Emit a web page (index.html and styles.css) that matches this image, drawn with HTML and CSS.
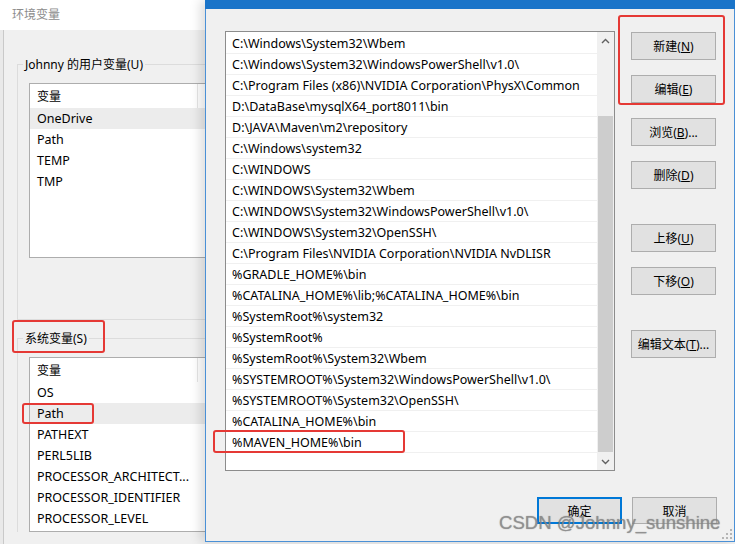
FILE: index.html
```html
<!DOCTYPE html>
<html lang="zh">
<head>
  <meta charset="UTF-8" />
  <meta name="viewport" content="width=device-width, initial-scale=1.0"/>
  <title>编辑环境变量</title>
  <link rel="stylesheet" href="styles.css">
</head>
<body>
  <!-- 后面的 环境变量 窗口 -->
  <div class="win-back">
    <div class="back-title">环境变量</div>
    <div class="back-body">
      <fieldset class="group group-user">
        <legend>Johnny 的用户变量(U)</legend>
        <div class="varlist">
          <div class="varlist-head"><span class="col-name">变量</span><span class="col-value">值</span></div>
          <div class="var-row selected">OneDrive</div>
          <div class="var-row">Path</div>
          <div class="var-row">TEMP</div>
          <div class="var-row">TMP</div>
        </div>
      </fieldset>
      <fieldset class="group group-sys">
        <legend>系统变量(S)</legend>
        <div class="varlist">
          <div class="varlist-head"><span class="col-name">变量</span><span class="col-value">值</span></div>
          <div class="var-row">OS</div>
          <div class="var-row selected">Path</div>
          <div class="var-row">PATHEXT</div>
          <div class="var-row">PERL5LIB</div>
          <div class="var-row">PROCESSOR_ARCHITECT...</div>
          <div class="var-row">PROCESSOR_IDENTIFIER</div>
          <div class="var-row">PROCESSOR_LEVEL</div>
        </div>
      </fieldset>
    </div>
  </div>

  <!-- 前面的 编辑环境变量 窗口 -->
  <div class="win-front">
    <div class="front-band"></div>
    <div class="front-body">
      <div class="front-main">
        <div class="pathlist">
          <div class="path-rows">
            <div class="path-row">C:\Windows\System32\Wbem</div>
            <div class="path-row">C:\Windows\System32\WindowsPowerShell\v1.0\</div>
            <div class="path-row">C:\Program Files (x86)\NVIDIA Corporation\PhysX\Common</div>
            <div class="path-row">D:\DataBase\mysqlX64_port8011\bin</div>
            <div class="path-row">D:\JAVA\Maven\m2\repository</div>
            <div class="path-row">C:\Windows\system32</div>
            <div class="path-row">C:\WINDOWS</div>
            <div class="path-row">C:\WINDOWS\System32\Wbem</div>
            <div class="path-row">C:\WINDOWS\System32\WindowsPowerShell\v1.0\</div>
            <div class="path-row">C:\WINDOWS\System32\OpenSSH\</div>
            <div class="path-row">C:\Program Files\NVIDIA Corporation\NVIDIA NvDLISR</div>
            <div class="path-row">%GRADLE_HOME%\bin</div>
            <div class="path-row">%CATALINA_HOME%\lib;%CATALINA_HOME%\bin</div>
            <div class="path-row">%SystemRoot%\system32</div>
            <div class="path-row">%SystemRoot%</div>
            <div class="path-row">%SystemRoot%\System32\Wbem</div>
            <div class="path-row">%SYSTEMROOT%\System32\WindowsPowerShell\v1.0\</div>
            <div class="path-row">%SYSTEMROOT%\System32\OpenSSH\</div>
            <div class="path-row">%CATALINA_HOME%\bin</div>
            <div class="path-row">%MAVEN_HOME%\bin</div>
          </div>
          <div class="scrollbar">
            <div class="scroll-btn">
              <svg width="9" height="6" viewBox="0 0 9 6"><path d="M1 5 L4.5 1.5 L8 5" fill="none" stroke="#606060" stroke-width="1.4"/></svg>
            </div>
            <div class="scroll-track"><div class="scroll-thumb"></div></div>
            <div class="scroll-btn">
              <svg width="9" height="6" viewBox="0 0 9 6"><path d="M1 1 L4.5 4.5 L8 1" fill="none" stroke="#606060" stroke-width="1.4"/></svg>
            </div>
          </div>
        </div>
        <div class="btn-col">
          <button class="btn">新建(<u>N</u>)</button>
          <button class="btn">编辑(<u>E</u>)</button>
          <button class="btn">浏览(<u>B</u>)...</button>
          <button class="btn">删除(<u>D</u>)</button>
          <button class="btn gap-big">上移(<u>U</u>)</button>
          <button class="btn">下移(<u>O</u>)</button>
          <button class="btn gap-big">编辑文本(<u>T</u>)...</button>
        </div>
      </div>
      <div class="front-foot">
        <button class="btn btn-default">确定</button>
        <button class="btn">取消</button>
      </div>
    </div>
    <svg class="grip" width="10" height="10" viewBox="0 0 10 10">
      <g fill="#b5b5b5">
        <rect x="8" y="0" width="2" height="2"/>
        <rect x="4" y="4" width="2" height="2"/><rect x="8" y="4" width="2" height="2"/>
        <rect x="0" y="8" width="2" height="2"/><rect x="4" y="8" width="2" height="2"/><rect x="8" y="8" width="2" height="2"/>
      </g>
    </svg>
  </div>

  <!-- 红色标注框 -->
  <div class="mark mark-sys"></div>
  <div class="mark mark-path"></div>
  <div class="mark mark-maven"></div>
  <div class="mark mark-btns"></div>

  <div class="watermark">CSDN @Johnny_sunshine</div>
</body>
</html>
```

FILE: styles.css
```css
body {
  margin: 0;
  width: 735px;
  height: 544px;
  overflow: hidden;
  position: relative;
  background: #e9e9e9;
  font-family: "Noto Sans", "Noto Sans CJK SC", sans-serif;
  font-size: 12px;
  color: #000;
}
button {
  font-family: inherit;
  font-size: 12px;
}

/* back window */
.win-back {
  position: absolute;
  left: 0;
  top: 0;
  width: 735px;
  height: 544px;
}
.back-title {
  height: 30px;
  background: #fff;
  color: #8c8c8c;
  padding-left: 12px;
  line-height: 29px;
}
.back-body {
  margin-left: 3px;
  border-left: 1px solid #c9c9c9;
  background: #f0f0f0;
  height: 514px;
  padding-left: 13px;
  padding-top: 26px;
  box-sizing: border-box;
}
.group {
  border: 1px solid #dcdcdc;
  margin: 0;
  padding: 0 0 0 11px;
  min-width: 0;
}
.group legend {
  padding: 0 2px;
  margin-left: -6px;
  line-height: 17px;
}
.group-user {
  padding-bottom: 61px;
}
.group-sys {
  margin-top: 10px;
  border-bottom: none;
}
.varlist {
  margin-top: 10px;
  width: 420px;
  height: 175px;
  box-sizing: border-box;
  border: 1px solid #adadad;
  background: #fff;
  font-size: 12.5px;
}
.varlist-head {
  display: flex;
  height: 24px;
  line-height: 25px;
  font-size: 12px;
}
.col-name {
  width: 160px;
  padding-left: 7px;
  border-right: 1px solid #e5e5e5;
}
.col-value {
  padding-left: 7px;
}
.var-row {
  height: 21px;
  line-height: 22px;
  padding-left: 7px;
}
.var-row.selected {
  background: #ececec;
}

/* front window */
.win-front {
  position: absolute;
  left: 205px;
  top: 0;
  width: 530px;
  height: 542px;
  box-sizing: border-box;
  border: 1px solid #4a90d6;
  border-top: none;
  background: #f0f0f0;
  box-shadow: -5px 0 10px rgba(0, 0, 0, 0.13);
}
.front-band {
  height: 9px;
  background: #1a74c9;
  margin: 0 -1px;
}
.front-body {
  padding: 22px 17px 0 19px;
}
.front-main {
  display: flex;
  gap: 16px;
}
.pathlist {
  width: 390px;
  height: 440px;
  box-sizing: border-box;
  border: 1px solid #8c8c8c;
  background: #fff;
  display: flex;
  font-size: 12.5px;
}
.path-rows {
  flex: 1;
  padding-top: 1px;
}
.path-row {
  height: 21px;
  line-height: 22px;
  padding-left: 6px;
  border-bottom: 1px solid #f0f0f0;
  box-sizing: border-box;
  white-space: nowrap;
}
.scrollbar {
  width: 17px;
  background: #f0f0f0;
  display: flex;
  flex-direction: column;
}
.scroll-btn {
  height: 17px;
  display: flex;
  align-items: center;
  justify-content: center;
}
.scroll-track {
  flex: 1;
  padding: 67px 1px 0 1px;
}
.scroll-thumb {
  height: 336px;
  background: #cdcdcd;
}
.btn-col {
  display: flex;
  flex-direction: column;
  padding-top: 1px;
}
.btn {
  width: 85px;
  height: 28px;
  margin: 0 0 15px 0;
  padding: 0;
  border: 1px solid #adadad;
  background: #e1e1e1;
  color: #000;
  box-sizing: border-box;
}
.btn.gap-big {
  margin-top: 20px;
}
.front-foot {
  display: flex;
  justify-content: flex-end;
  gap: 10px;
  margin-top: 26px;
}
.front-foot .btn {
  margin: 0;
  height: 27px;
}
.btn-default {
  border: 2px solid #0078d7;
}
.grip {
  position: absolute;
  right: 2px;
  bottom: 2px;
}

/* red marks */
.mark {
  position: absolute;
  border: 2px solid #e53935;
  border-radius: 3px;
  box-sizing: border-box;
}
.mark-sys {
  left: 12px;
  top: 320px;
  width: 93px;
  height: 33px;
}
.mark-path {
  left: 22px;
  top: 403px;
  width: 72px;
  height: 21px;
}
.mark-maven {
  left: 213px;
  top: 430px;
  width: 192px;
  height: 23px;
}
.mark-btns {
  left: 618px;
  top: 15px;
  width: 107px;
  height: 90px;
}

.watermark {
  position: absolute;
  left: 499px;
  top: 512px;
  font-family: "Liberation Sans", Arial, sans-serif;
  font-size: 18.6px;
  color: rgba(140, 140, 140, 0.8);
  text-shadow: 0 0 1px rgba(70, 70, 70, 0.55);
  white-space: nowrap;
}
```
